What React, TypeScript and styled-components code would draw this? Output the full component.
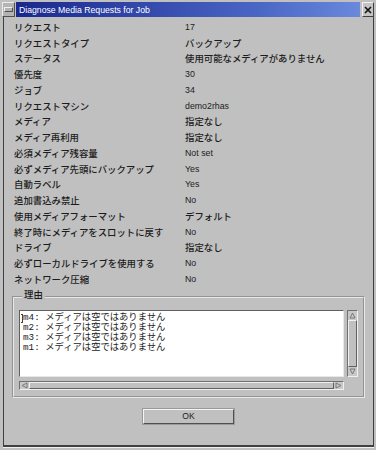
import React from 'react';
import styled, { createGlobalStyle } from 'styled-components';

const GlobalStyle = createGlobalStyle`
  html, body {
    margin: 0;
    padding: 0;
    background: #c0c0c0;
  }
  * {
    box-sizing: border-box;
  }
`;

const rows: [string, string][] = [
  ['リクエスト', '17'],
  ['リクエストタイプ', 'バックアップ'],
  ['ステータス', '使用可能なメディアがありません'],
  ['優先度', '30'],
  ['ジョブ', '34'],
  ['リクエストマシン', 'demo2rhas'],
  ['メディア', '指定なし'],
  ['メディア再利用', '指定なし'],
  ['必須メディア残容量', 'Not set'],
  ['必ずメディア先頭にバックアップ', 'Yes'],
  ['自動ラベル', 'Yes'],
  ['追加書込み禁止', 'No'],
  ['使用メディアフォーマット', 'デフォルト'],
  ['終了時にメディアをスロットに戻す', 'No'],
  ['ドライブ', '指定なし'],
  ['必ずローカルドライブを使用する', 'No'],
  ['ネットワーク圧縮', 'No'],
];

const reasons = ['m4', 'm2', 'm3', 'm1'];

const Window = styled.div`
  width: 376px;
  height: 450px;
  display: flex;
  flex-direction: column;
  padding: 2px 2px 3px 2px;
  background: #c0c0c0;
  font-family: 'Liberation Sans', 'Noto Sans CJK JP', sans-serif;
  color: #1c1c1c;
`;

const TitleBar = styled.div`
  display: flex;
  height: 15px;
  gap: 1px;
`;

const MenuButton = styled.div`
  width: 13px;
  background: #b4b4b4;
  border: 1px solid;
  border-color: #ececec #505050 #505050 #ececec;
  display: flex;
  align-items: center;
  justify-content: center;

  &::after {
    content: '';
    width: 7px;
    height: 3px;
    border: 1px solid;
    border-color: #f0f0f0 #505050 #505050 #f0f0f0;
  }
`;

const Title = styled.div`
  flex: 1;
  display: flex;
  align-items: center;
  padding-left: 3px;
  background: linear-gradient(to right, #1a288e, #4a66c4 70%, #6a88dc);
  color: #ffffff;
  font-size: 8.7px;
  white-space: nowrap;
`;

const CloseButton = styled.div`
  width: 12px;
  margin-left: 1px;
  background: #c4c4c4;
  border: 1px solid;
  border-color: #f0f0f0 #404040 #404040 #f0f0f0;
  display: flex;
  align-items: center;
  justify-content: center;
`;

const Content = styled.div`
  flex: 1;
  margin-left: 1px;
  display: flex;
  flex-direction: column;
  padding: 2px 8px 0 8px;
  border-left: 1px solid #404040;
  border-right: 1px solid #404040;
  border-bottom: 2px solid #404040;
  box-shadow: 0 1px 0 #f0f0f0;
`;

const Grid = styled.div`
  display: grid;
  grid-template-columns: 171px 1fr;
  grid-auto-rows: 15.75px;
  padding-left: 2px;
  align-items: center;
`;

const Label = styled.div`
  font-family: 'Noto Sans CJK JP', sans-serif;
  font-size: 9.4px;
  font-weight: 500;
  line-height: 12px;
  white-space: nowrap;
`;

const Value = styled.div<{ $latin: boolean }>`
  font-family: ${(p) => (p.$latin ? "'Liberation Sans', sans-serif" : "'Noto Sans CJK JP', sans-serif")};
  font-size: ${(p) => (p.$latin ? '8.8px' : '9.4px')};
  font-weight: 500;
  line-height: 12px;
  white-space: nowrap;
`;

const Group = styled.fieldset`
  margin: 2px 0 0 0;
  padding: 5px 5px 6px 5px;
  border: 2px groove #e8e8e8;
  min-width: 0;
`;

const Legend = styled.legend`
  margin-left: 3px;
  padding: 0 2px 6px 2px;
  font-family: 'Noto Sans CJK JP', sans-serif;
  font-size: 9.4px;
  font-weight: 500;
  line-height: 10px;
`;

const Pane = styled.div`
  display: grid;
  grid-template-columns: 1fr 11px;
  grid-template-rows: 67px 9px;
  column-gap: 3px;
  row-gap: 4px;
`;

const TextArea = styled.div`
  position: relative;
  background: #ffffff;
  border: 1px solid;
  border-color: #606060 #e8e8e8 #e8e8e8 #606060;
  padding: 2px 3px;
  font-family: 'Liberation Mono', 'Noto Sans CJK JP', monospace;
  font-size: 9.3px;
  line-height: 10px;
  overflow: hidden;
`;

const Line = styled.div`
  white-space: pre;
`;

const Caret = styled.div`
  position: absolute;
  left: 1px;
  top: 3px;
  width: 2px;
  height: 9px;
  border: 1px solid #404040;
  border-left: none;
`;

const Trough = styled.div<{ $vertical?: boolean }>`
  display: flex;
  flex-direction: ${(p) => (p.$vertical ? 'column' : 'row')};
  background: #a8a8a8;
  border: 1px solid;
  border-color: #707070 #f0f0f0 #f0f0f0 #707070;
`;

const Arrow = styled.div<{ $vertical?: boolean }>`
  flex: none;
  width: ${(p) => (p.$vertical ? 'auto' : '9px')};
  height: ${(p) => (p.$vertical ? '9px' : 'auto')};
  display: flex;
  align-items: center;
  justify-content: center;
  background: #c8c8c8;
`;

const Thumb = styled.div`
  flex: 1;
  background: #c0c0c0;
  border: 1px solid;
  border-color: #f0f0f0 #606060 #606060 #f0f0f0;
`;

const Corner = styled.div``;

const ButtonRow = styled.div`
  display: flex;
  justify-content: center;
  padding-top: 11px;
`;

const Button = styled.div`
  width: 91px;
  height: 15px;
  display: flex;
  align-items: center;
  justify-content: center;
  background: #c0c0c0;
  border: 1px solid;
  border-color: #f4f4f4 #505050 #505050 #f4f4f4;
  box-shadow: 0 0 0 1px #9a9a9a;
  font-size: 8.6px;
`;

const Tri = ({ dir }: { dir: 'up' | 'down' | 'left' | 'right' }) => {
  const pts = {
    up: '1,6 3.5,1 6,6',
    down: '1,1 3.5,6 6,1',
    left: '6,1 1,3.5 6,6',
    right: '1,1 6,3.5 1,6',
  }[dir];
  return (
    <svg width="7" height="7" viewBox="0 0 7 7">
      <polygon points={pts} fill="#c8c8c8" stroke="#707070" strokeWidth="0.9" />
    </svg>
  );
};

export default function App() {
  return (
    <>
      <GlobalStyle />
      <Window>
        <TitleBar>
          <MenuButton />
          <Title>Diagnose Media Requests for Job</Title>
          <CloseButton>
            <svg width="8" height="8" viewBox="0 0 8 8">
              <path d="M1 1 L7 7 M7 1 L1 7" stroke="#111" strokeWidth="1.6" />
            </svg>
          </CloseButton>
        </TitleBar>
        <Content>
          <Grid>
            {rows.map(([k, v]) => (
              <React.Fragment key={k}>
                <Label>{k}</Label>
                <Value $latin={/^[\x00-\x7f]+$/.test(v)}>{v}</Value>
              </React.Fragment>
            ))}
          </Grid>
          <Group>
            <Legend>理由</Legend>
            <Pane>
              <TextArea>
                <Caret />
                {reasons.map((m) => (
                  <Line key={m}>{`${m}: メディアは空ではありません`}</Line>
                ))}
              </TextArea>
              <Trough $vertical>
                <Arrow $vertical>
                  <Tri dir="up" />
                </Arrow>
                <Thumb />
                <Arrow $vertical>
                  <Tri dir="down" />
                </Arrow>
              </Trough>
              <Trough>
                <Arrow>
                  <Tri dir="left" />
                </Arrow>
                <Thumb />
                <Arrow>
                  <Tri dir="right" />
                </Arrow>
              </Trough>
              <Corner />
            </Pane>
          </Group>
          <ButtonRow>
            <Button>OK</Button>
          </ButtonRow>
        </Content>
      </Window>
    </>
  );
}
